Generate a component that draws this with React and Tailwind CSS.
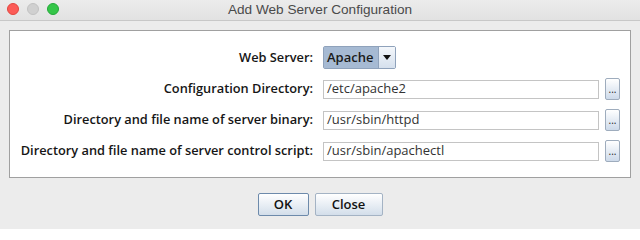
const rows = [
    { label: 'Configuration Directory:', value: '/etc/apache2' },
    { label: 'Directory and file name of server binary:', value: '/usr/sbin/httpd' },
    { label: 'Directory and file name of server control script:', value: '/usr/sbin/apachectl' },
]

const openSans = { fontFamily: '"Open Sans", sans-serif' }

function BrowseButton() {
    return (
        <button
            type="button"
            className="w-[15px] h-[22px] ml-[6px] rounded-[2px] border border-[#9eacbd] bg-gradient-to-b from-[#ffffff] to-[#cddaea] text-[10px] leading-none text-[#222] flex items-end justify-center pb-[5px]"
        >
            ...
        </button>
    )
}

export default function App() {
    return (
        <div className="w-[640px] h-[229px] bg-[#ececec] overflow-hidden" style={openSans}>
            {/* Title bar */}
            <div className="relative h-[21px] border-b border-[#c8c8c8] bg-gradient-to-b from-[#ececec] to-[#e2e2e2] flex items-center justify-center">
                <div className="absolute left-[7px] top-[3px] flex gap-[8px]">
                    <span className="w-[12px] h-[12px] rounded-full bg-[#fc5b57] border border-[#e2463f]" />
                    <span className="w-[12px] h-[12px] rounded-full bg-[#d0d0d0] border border-[#c2c2c2]" />
                    <span className="w-[12px] h-[12px] rounded-full bg-[#35c649] border border-[#24a93a]" />
                </div>
                <span className="text-[13.6px] text-[#4a4a4a]" style={{ fontFamily: '"Liberation Sans", Arial, sans-serif' }}>
                    Add Web Server Configuration
                </span>
            </div>

            {/* Form panel */}
            <div className="mx-[9px] mt-[9px] h-[148px] border border-[#a0a0a0] bg-white flex flex-col pt-[15px] pr-[10px] gap-[9px]">
                <div className="flex items-center h-[23px]">
                    <div className="w-[313px] shrink-0 text-right text-[12.8px] font-semibold text-[#161616] pr-[10px]">
                        Web Server:
                    </div>
                    <div className="flex h-[23px] border border-[#8fa2bb] rounded-[2px]">
                        <div className="w-[54px] bg-[#a6bad3] text-[13px] font-semibold text-[#1a1a1a] flex items-center pl-[3px]">
                            Apache
                        </div>
                        <div className="w-[17px] border-l border-[#8fa2bb] bg-gradient-to-b from-[#f4f7fb] to-[#d5e0ed] flex items-center justify-center">
                            <svg width="8" height="5" viewBox="0 0 8 5"><path d="M0 0h8L4 5z" fill="#111" /></svg>
                        </div>
                    </div>
                </div>
                {rows.map((row) => (
                    <div key={row.label} className="flex items-center h-[22px]">
                        <div className="w-[313px] shrink-0 text-right text-[12.8px] font-semibold text-[#161616] pr-[10px] whitespace-nowrap">
                            {row.label}
                        </div>
                        <div className="flex-1 h-[19px] border border-[#c4c4c4] bg-white flex items-center pl-[3px] text-[13px] text-[#333]">
                            {row.value}
                        </div>
                        <BrowseButton />
                    </div>
                ))}
            </div>

            {/* Buttons */}
            <div className="flex justify-center gap-[6px] mt-[15px]">
                <button type="button" className="w-[51px] h-[23px] rounded-[2px] border border-[#6d8aab] bg-gradient-to-b from-[#ffffff] to-[#d3deea] text-[13px] font-semibold text-[#111]">
                    OK
                </button>
                <button type="button" className="w-[68px] h-[23px] rounded-[2px] border border-[#a4b3c4] bg-gradient-to-b from-[#ffffff] to-[#d3deea] text-[13px] font-semibold text-[#111]">
                    Close
                </button>
            </div>
        </div>
    )
}
